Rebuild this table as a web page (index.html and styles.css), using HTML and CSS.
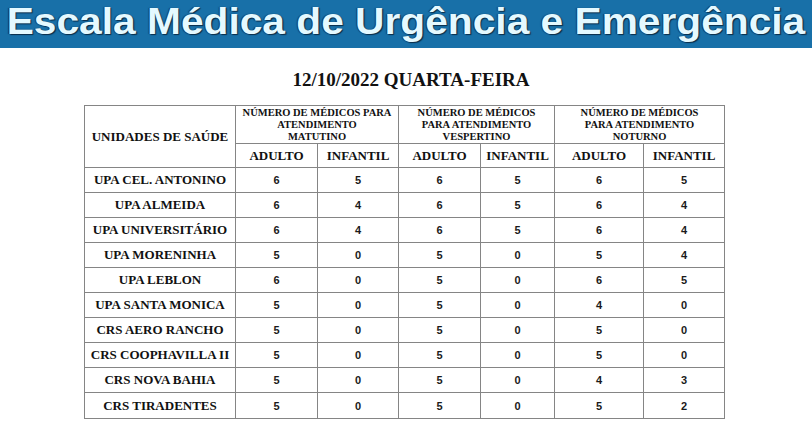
FILE: index.html
```html
<!DOCTYPE html>
<html lang="pt-BR">
<head>
<meta charset="utf-8">
<title>Escala Médica de Urgência e Emergência</title>
<link rel="stylesheet" href="styles.css">
</head>
<body>
<header class="banner"><h1 class="banner-title">Escala Médica de Urgência e Emergência</h1></header>
<h2 class="date-title">12/10/2022 QUARTA-FEIRA</h2>
<table class="scale">
  <colgroup>
    <col class="c-unit"><col class="c-a1"><col class="c-i1"><col class="c-a2"><col class="c-i2"><col class="c-a3"><col class="c-i3">
  </colgroup>
  <thead>
    <tr class="h1">
      <th rowspan="2" class="unit-head">UNIDADES DE SAÚDE</th>
      <th colspan="2" class="group">NÚMERO DE MÉDICOS PARA<br>ATENDIMENTO<br>MATUTINO</th>
      <th colspan="2" class="group">NÚMERO DE MÉDICOS<br>PARA ATENDIMENTO<br>VESPERTINO</th>
      <th colspan="2" class="group">NÚMERO DE MÉDICOS<br>PARA ATENDIMENTO<br>NOTURNO</th>
    </tr>
    <tr class="h2">
      <th class="sub">ADULTO</th><th class="sub">INFANTIL</th>
      <th class="sub">ADULTO</th><th class="sub">INFANTIL</th>
      <th class="sub">ADULTO</th><th class="sub">INFANTIL</th>
    </tr>
  </thead>
  <tbody>
    <tr><td class="name">UPA CEL. ANTONINO</td><td>6</td><td>5</td><td>6</td><td>5</td><td>6</td><td>5</td></tr>
    <tr><td class="name">UPA ALMEIDA</td><td>6</td><td>4</td><td>6</td><td>5</td><td>6</td><td>4</td></tr>
    <tr><td class="name">UPA UNIVERSITÁRIO</td><td>6</td><td>4</td><td>6</td><td>5</td><td>6</td><td>4</td></tr>
    <tr><td class="name">UPA MORENINHA</td><td>5</td><td>0</td><td>5</td><td>0</td><td>5</td><td>4</td></tr>
    <tr><td class="name">UPA LEBLON</td><td>6</td><td>0</td><td>5</td><td>0</td><td>6</td><td>5</td></tr>
    <tr><td class="name">UPA SANTA MONICA</td><td>5</td><td>0</td><td>5</td><td>0</td><td>4</td><td>0</td></tr>
    <tr><td class="name">CRS AERO RANCHO</td><td>5</td><td>0</td><td>5</td><td>0</td><td>5</td><td>0</td></tr>
    <tr><td class="name">CRS COOPHAVILLA II</td><td>5</td><td>0</td><td>5</td><td>0</td><td>5</td><td>0</td></tr>
    <tr><td class="name">CRS NOVA BAHIA</td><td>5</td><td>0</td><td>5</td><td>0</td><td>4</td><td>3</td></tr>
    <tr class="last"><td class="name">CRS TIRADENTES</td><td>5</td><td>0</td><td>5</td><td>0</td><td>5</td><td>2</td></tr>
  </tbody>
</table>
</body>
</html>
```
FILE: styles.css
```css
html, body {
  margin: 0;
  padding: 0;
  background: #ffffff;
}
body {
  width: 812px;
  font-family: "Liberation Serif", "Times New Roman", serif;
  color: #111;
}
.banner {
  height: 48px;
  background: #1870a8;
  display: flex;
  align-items: center;
  justify-content: center;
  overflow: hidden;
}
.banner-title {
  margin: 0;
  font-family: "Liberation Sans", Arial, sans-serif;
  font-weight: bold;
  font-size: 37px;
  line-height: 48px;
  color: #e4f9ff;
  text-shadow: 1px 1px 1px #0b2c48, -1px 0 1px #0e3a5c;
  white-space: nowrap;
  transform: translateY(-2px) scaleX(1.1);
}
.date-title {
  margin: 21px 0 14px 0;
  padding-left: 10px;
  text-align: center;
  font-size: 19px;
  line-height: 22px;
  font-weight: bold;
}
.scale {
  margin-left: 84px;
  border-collapse: collapse;
  table-layout: fixed;
  width: 640px;
}
.c-unit { width: 151px; }
.c-a1 { width: 82px; }
.c-i1 { width: 81px; }
.c-a2 { width: 82px; }
.c-i2 { width: 74px; }
.c-a3 { width: 89px; }
.c-i3 { width: 81px; }
.scale th, .scale td {
  border: 1px solid #858585;
  padding: 0;
  text-align: center;
  vertical-align: middle;
}
.h1 { height: 38px; }
.h2 { height: 24px; }
.unit-head {
  font-size: 13px;
  font-weight: bold;
}
.group {
  font-size: 10.5px;
  line-height: 12px;
  font-weight: bold;
  vertical-align: top;
  padding-top: 1px;
}
.sub {
  font-size: 13px;
  font-weight: bold;
}
.scale tbody tr { height: 25px; }
.scale tbody tr.last { height: 26px; }
.scale td {
  font-family: "Liberation Sans", Arial, sans-serif;
  font-size: 11px;
  font-weight: bold;
  color: #1a1a1a;
}
.scale td.name {
  font-family: "Liberation Serif", "Times New Roman", serif;
  font-size: 13px;
  color: #111;
}
```
